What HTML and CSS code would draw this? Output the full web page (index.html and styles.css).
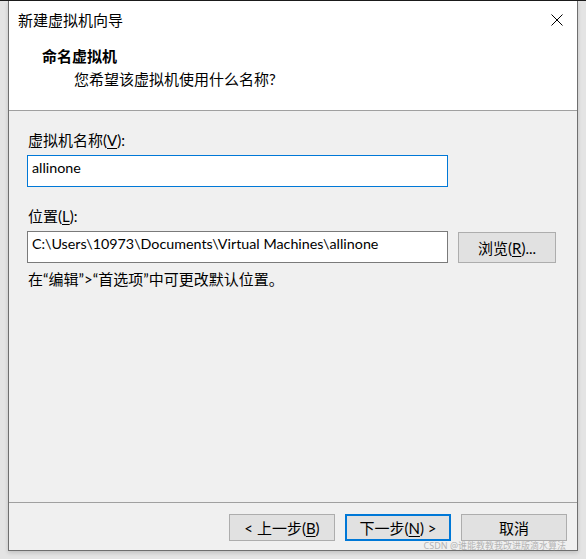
FILE: index.html
```html
<!DOCTYPE html>
<html lang="zh-CN">
<head>
<meta charset="utf-8">
<title>新建虚拟机向导</title>
<link rel="stylesheet" href="styles.css">
</head>
<body>
<div class="desktop">
  <div class="dialog">
    <div class="top">
      <div class="titlebar">
        <span class="title">新建虚拟机向导</span>
        <span class="close">
          <svg width="12" height="12" viewBox="0 0 12 12"><path d="M0.5 0.5L11.5 11.5M11.5 0.5L0.5 11.5" stroke="#000" stroke-width="1" fill="none"/></svg>
        </span>
      </div>
      <div class="heading">命名虚拟机</div>
      <div class="subtitle">您希望该虚拟机使用什么名称?</div>
    </div>
    <div class="body">
      <div class="label">虚拟机名称(<u>V</u>):</div>
      <div class="input focused">allinone</div>
      <div class="label second">位置(<u>L</u>):</div>
      <div class="row">
        <div class="input">C:\Users\10973\Documents\Virtual Machines\allinone</div>
        <div class="btn browse">浏览(<u>R</u>)...</div>
      </div>
      <div class="hint">在“编辑”&gt;“首选项”中可更改默认位置。</div>
    </div>
    <div class="footer">
      <div class="btn">&lt; 上一步(<u>B</u>)</div>
      <div class="btn primary">下一步(<u>N</u>) &gt;</div>
      <div class="btn">取消</div>
    </div>
  </div>
  <div class="watermark">CSDN @谁能教教我改进版滴水算法</div>
</div>
</body>
</html>
```
FILE: styles.css
```css
* { box-sizing: border-box; }
html, body { margin: 0; padding: 0; }
body {
  width: 586px;
  height: 559px;
  overflow: hidden;
  background: #e4e4e4;
  font-family: "Lato", "Noto Sans CJK SC", sans-serif;
  font-size: 15px;
  color: #000;
}
.desktop {
  position: relative;
  width: 586px;
  height: 559px;
  background: #e4e4e4;
  padding-left: 8px;
  border-top: 1px solid #1b1b1b;
}
.dialog {
  width: 570px;
  height: 550px;
  border: 1px solid #6f6f6f;
  border-top: none;
  background: #f0f0f0;
  display: flex;
  flex-direction: column;
  box-shadow: 0 2px 4px rgba(0,0,0,0.15);
}
.top {
  background: #fff;
  height: 110px;
  border-bottom: 1px solid #a0a0a0;
  flex: none;
}
.titlebar {
  height: 37px;
  display: flex;
  align-items: center;
  justify-content: space-between;
  padding-left: 9px;
  padding-right: 14px;
}
.title { line-height: 20px; }
.close { display: flex; width: 12px; height: 12px; }
.heading {
  font-weight: bold;
  line-height: 20px;
  margin-top: 8px;
  padding-left: 33px;
}
.subtitle {
  line-height: 20px;
  margin-top: 3px;
  padding-left: 65px;
}
.body {
  flex: 1;
  padding: 19px 0 0 18px;
  border-bottom: 1px solid #a0a0a0;
}
.label { line-height: 20px; padding-left: 1px; }
.label.second { margin-top: 19px; }
.input {
  margin-top: 5px;
  width: 421px;
  height: 32px;
  background: #fff;
  border: 1px solid #7a7a7a;
  font-size: 14.3px;
  line-height: 24px;
  padding-left: 4px;
  white-space: nowrap;
}
.input.focused { border-color: #0078d7; }
.row {
  display: flex;
  align-items: flex-start;
}
.btn {
  height: 27px;
  background: #e1e1e1;
  border: 1px solid #adadad;
  display: flex;
  align-items: center;
  justify-content: center;
  width: 106px;
  line-height: 20px;
}
.btn.primary { border: 2px solid #0078d7; }
.browse {
  margin-top: 6px;
  margin-left: 10px;
  width: 98px;
  height: 31px;
}
.hint { line-height: 20px; margin-top: 6px; padding-left: 1px; }
.footer {
  flex: none;
  height: 47px;
  display: flex;
  justify-content: flex-end;
  align-items: flex-start;
  gap: 10px;
  padding: 11px 10px 0 0;
}
u { text-decoration: underline; text-underline-offset: 2px; }
.watermark {
  position: absolute;
  right: 20px;
  top: 538px;
  font-family: "Noto Sans", "Noto Sans CJK SC", sans-serif;
  font-size: 9px;
  line-height: 14px;
  color: #b4b4b4;
}
```
